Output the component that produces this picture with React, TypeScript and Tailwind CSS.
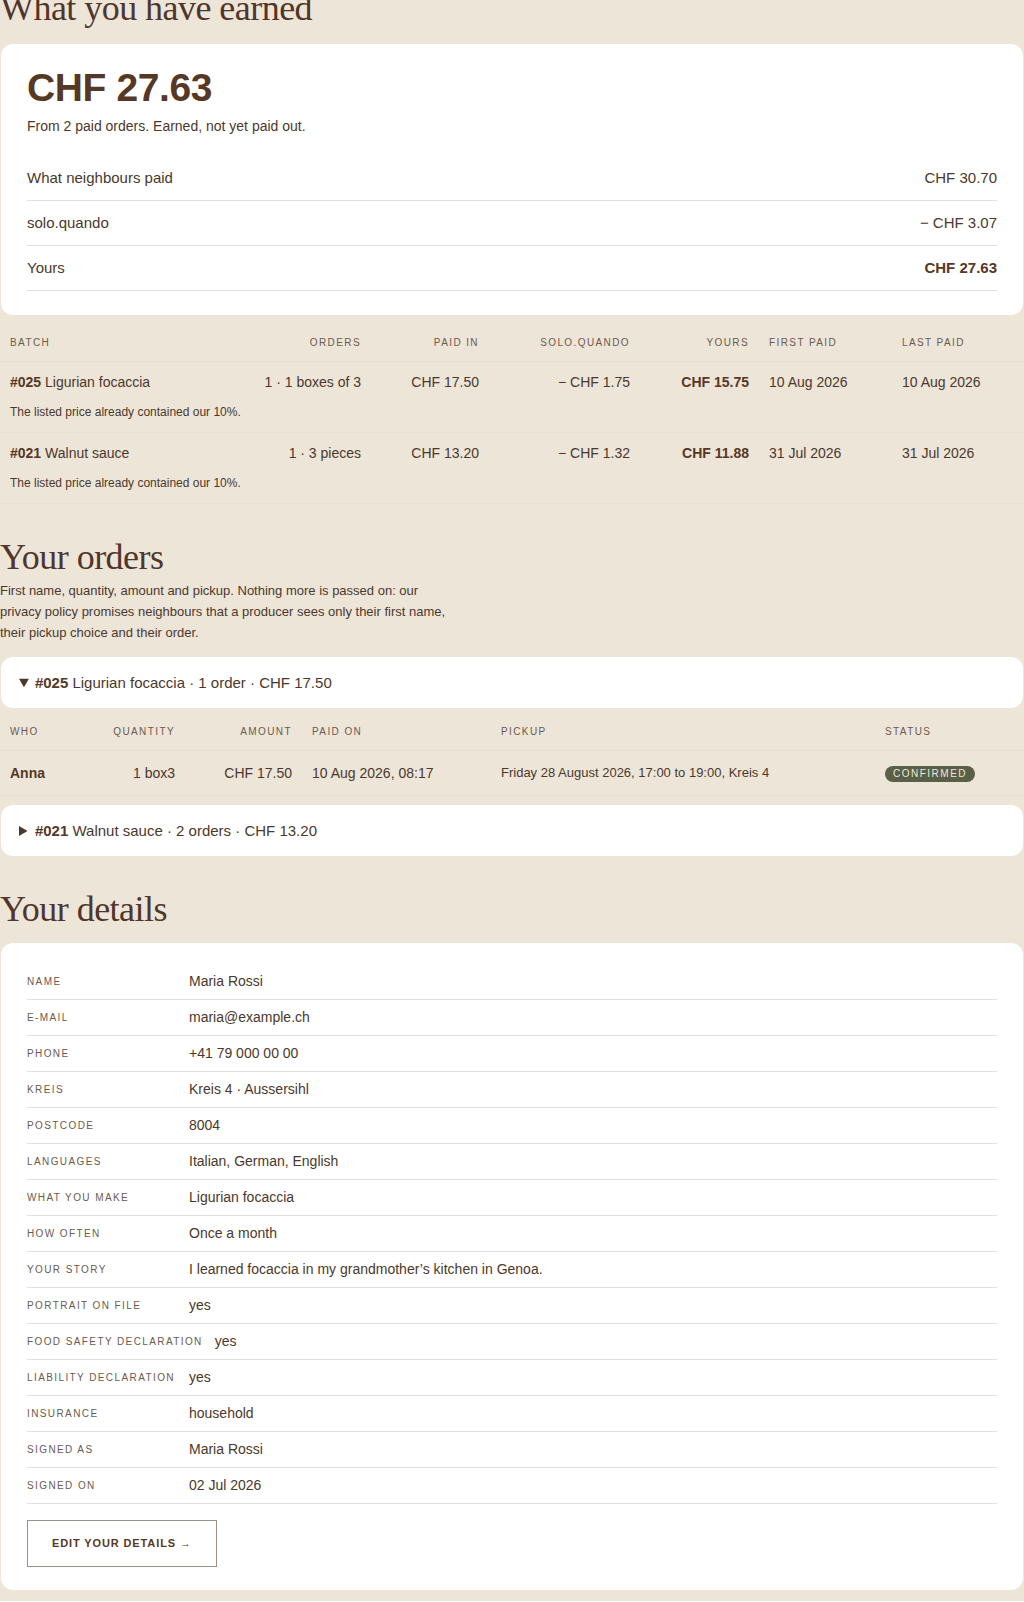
import React from "react";

const batches = [
  { id: "#025", name: "Ligurian focaccia", orders: "1 · 1 boxes of 3", paidIn: "CHF 17.50", fee: "− CHF 1.75", yours: "CHF 15.75", first: "10 Aug 2026", last: "10 Aug 2026" },
  { id: "#021", name: "Walnut sauce", orders: "1 · 3 pieces", paidIn: "CHF 13.20", fee: "− CHF 1.32", yours: "CHF 11.88", first: "31 Jul 2026", last: "31 Jul 2026" },
];

const details: [string, string][] = [
  ["Name", "Maria Rossi"],
  ["E-mail", "maria@example.ch"],
  ["Phone", "+41 79 000 00 00"],
  ["Kreis", "Kreis 4 · Aussersihl"],
  ["Postcode", "8004"],
  ["Languages", "Italian, German, English"],
  ["What you make", "Ligurian focaccia"],
  ["How often", "Once a month"],
  ["Your story", "I learned focaccia in my grandmother’s kitchen in Genoa."],
  ["Portrait on file", "yes"],
  ["Food safety declaration", "yes"],
  ["Liability declaration", "yes"],
  ["Insurance", "household"],
  ["Signed as", "Maria Rossi"],
  ["Signed on", "02 Jul 2026"],
];

const th = "px-2.5 py-[10px] text-[10px] leading-4 font-normal uppercase tracking-[0.14em] text-[#6b5a4f] border-b border-[#e7e0d4] whitespace-nowrap";
const td = "px-2.5 pt-[10px] pb-[11px] whitespace-nowrap";

function Heading({ children, className = "" }: { children: React.ReactNode; className?: string }) {
  return (
    <h2 className={"font-['Liberation_Serif',serif] text-[36px] leading-[1.2] tracking-[-0.015em] text-[#50362a] " + className}>
      {children}
    </h2>
  );
}

export default function App() {
  return (
    <div className="min-h-screen bg-[#ede5d8] font-['Liberation_Sans',Arial,sans-serif] text-[#4b382c] pb-[11px]">
      <div className="-mt-[13px]">
        <Heading className="mb-3.5">What you have earned</Heading>
        <div className="mx-px bg-white rounded-xl px-[26px] py-6">
          <div className="text-[39px] leading-10 font-bold tracking-[-0.01em] text-[#563825]">CHF 27.63</div>
          <p className="mt-2 text-[14px] leading-5">From 2 paid orders. Earned, not yet paid out.</p>
          <div className="mt-5">
            <div className="flex justify-between py-3 text-[15px] leading-5 border-b border-[#e3dfd9]">
              <span>What neighbours paid</span>
              <span>CHF 30.70</span>
            </div>
            <div className="flex justify-between py-3 text-[15px] leading-5 border-b border-[#e3dfd9]">
              <span>solo.quando</span>
              <span>− CHF 3.07</span>
            </div>
            <div className="flex justify-between py-3 text-[15px] leading-5 border-b border-[#e3dfd9]">
              <span>Yours</span>
              <span className="font-bold text-[#563825]">CHF 27.63</span>
            </div>
          </div>
        </div>

        <table className="mt-2.5 w-full table-fixed border-collapse">
          <thead>
            <tr>
              <th className={th + " w-[250px] text-left"}>Batch</th>
              <th className={th + " w-[121px] text-right"}>Orders</th>
              <th className={th + " w-[118px] text-right"}>Paid in</th>
              <th className={th + " w-[151px] text-right"}>solo.quando</th>
              <th className={th + " w-[119px] text-right"}>Yours</th>
              <th className={th + " w-[133px] text-left"}>First paid</th>
              <th className={th + " text-left"}>Last paid</th>
            </tr>
          </thead>
          <tbody className="text-[14px] leading-5">
            {batches.map((b) => (
              <React.Fragment key={b.id}>
                <tr>
                  <td className={td}>
                    <b className="font-bold text-[#563825]">{b.id}</b> {b.name}
                  </td>
                  <td className={td + " text-right"}>{b.orders}</td>
                  <td className={td + " text-right"}>{b.paidIn}</td>
                  <td className={td + " text-right"}>{b.fee}</td>
                  <td className={td + " text-right font-bold text-[#563825]"}>{b.yours}</td>
                  <td className={td}>{b.first}</td>
                  <td className={td}>{b.last}</td>
                </tr>
                <tr className="border-b border-[#e7e0d4]">
                  <td colSpan={7} className="px-2.5 pb-[11px] text-[12px] leading-[18px]">
                    The listed price already contained our 10%.
                  </td>
                </tr>
              </React.Fragment>
            ))}
          </tbody>
        </table>

        <section className="mt-[29px]">
          <Heading className="pt-[3px] mb-[11px]">Your orders</Heading>
          <p className="-mt-2.5 max-w-[448px] text-[13px] leading-[21px]">
            First name, quantity, amount and pickup. Nothing more is passed on: our privacy policy promises neighbours that a producer sees only their first name, their pickup choice and their order.
          </p>

          <details open className="mt-3.5">
            <summary className="mx-px bg-white rounded-xl pl-[18px] pr-4 py-[15px] text-[15px] leading-[21px] cursor-pointer">
              <b className="font-bold text-[#563825]">#025</b> Ligurian focaccia · 1 order · CHF 17.50
            </summary>
            <table className="mt-[6px] mb-[9px] w-full table-fixed border-collapse">
              <thead>
                <tr>
                  <th className={th + " w-[100px] text-left"}>Who</th>
                  <th className={th + " w-[85px] text-right"}>Quantity</th>
                  <th className={th + " w-[117px] text-right"}>Amount</th>
                  <th className={th + " w-[189px] text-left"}>Paid on</th>
                  <th className={th + " w-[384px] text-left"}>Pickup</th>
                  <th className={th + " text-left"}>Status</th>
                </tr>
              </thead>
              <tbody className="text-[14px] leading-5">
                <tr className="border-b border-[#e7e0d4]">
                  <td className="px-2.5 py-3 font-bold text-[#563825]">Anna</td>
                  <td className="px-2.5 text-right whitespace-nowrap">1 box3</td>
                  <td className="px-2.5 text-right whitespace-nowrap">CHF 17.50</td>
                  <td className="px-2.5 whitespace-nowrap">10 Aug 2026, 08:17</td>
                  <td className="px-2.5 text-[13px]">Friday 28 August 2026, 17:00 to 19:00, Kreis 4</td>
                  <td className="px-2.5 leading-4">
                    <span className="inline-block align-middle rounded-full bg-[#5a5f47] px-2 py-px text-[10px] leading-[14px] uppercase tracking-[0.15em] text-[#ece8dc]">
                      Confirmed
                    </span>
                  </td>
                </tr>
              </tbody>
            </table>
          </details>

          <details>
            <summary className="mx-px bg-white rounded-xl pl-[18px] pr-4 py-[15px] text-[15px] leading-[21px] cursor-pointer">
              <b className="font-bold text-[#563825]">#021</b> Walnut sauce · 2 orders · CHF 13.20
            </summary>
          </details>
        </section>

        <section className="mt-[29px]">
          <Heading className="pt-[3px] mb-[11px]">Your details</Heading>
          <div className="mx-px bg-white rounded-xl px-[26px] pt-[21px] pb-[23px]">
            {details.map(([label, value]) => (
              <div key={label} className="flex items-center gap-3 py-[7px] border-b border-[#e3dfd9]">
                <span className="min-w-[150px] shrink-0 text-[10px] uppercase tracking-[0.14em] text-[#6b5a4f]">{label}</span>
                <span className="text-[14px] leading-[21px]">{value}</span>
              </div>
            ))}
            <button
              type="button"
              className="mt-4 border border-[#9d8e86] px-6 py-4 text-[11px] leading-[13px] font-bold uppercase tracking-[0.08em] text-[#563825]"
            >
              Edit your details →
            </button>
          </div>
        </section>
      </div>
    </div>
  );
}
